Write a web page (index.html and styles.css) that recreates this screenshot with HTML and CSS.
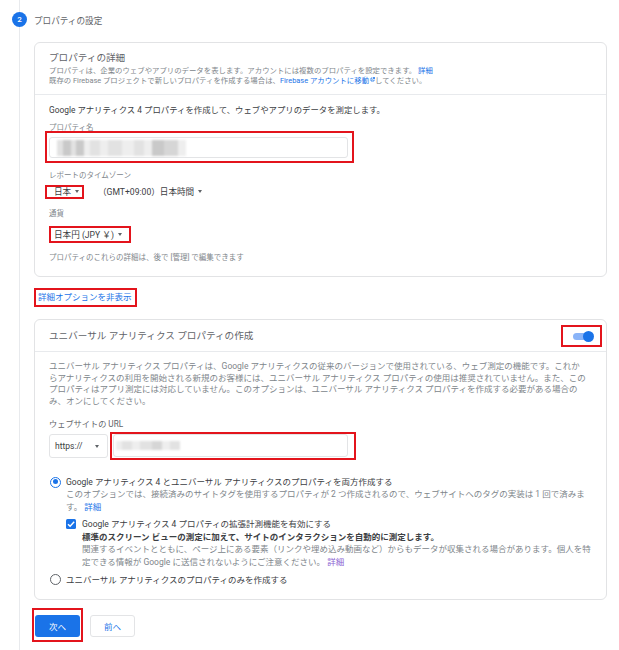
FILE: index.html
```html
<!DOCTYPE html>
<html lang="ja">
<head>
    <meta charset="UTF-8">
    <meta name="viewport" content="width=device-width, initial-scale=1.0">
    <title>プロパティの設定</title>
    <link rel="stylesheet" href="styles.css">
</head>
<body>
    <div class="step">
        <div class="step-head">
            <span class="step-num">2</span>
            <span class="step-title">プロパティの設定</span>
        </div>

        <div class="step-body">
            <!-- property details -->
            <section class="card">
                <div class="card-head">
                    <h2 class="card-title">プロパティの詳細</h2>
                    <p class="card-desc">
                        プロパティは、企業のウェブやアプリのデータを表します。アカウントには複数のプロパティを設定できます。 <a class="link" href="#">詳細</a><br>
                        既存の Firebase プロジェクトで新しいプロパティを作成する場合は、<a class="link" href="#">Firebase アカウントに移動<svg class="ext" viewBox="0 0 10 10"><path d="M2 2h3M2 2v6h6V5M6 1h3v3M9 1 5 5" fill="none" stroke="currentColor" stroke-width="1.6"/></svg></a>してください。
                    </p>
                </div>
                <div class="card-body">
                    <p class="lead">Google アナリティクス 4 プロパティを作成して、ウェブやアプリのデータを測定します。</p>

                    <div class="field-label label-name">プロパティ名</div>
                    <div class="mark mark-name">
                        <div class="text-input">
                            <span class="blur">
                                <i class="px g1 w6"></i><i class="px g3 w8"></i><i class="px g1 w5"></i><i class="px g3 w8"></i><i class="px g0 w6"></i><i class="px g1 w10"></i><i class="px g0 w8"></i><i class="px g1 w14"></i><i class="px g0 w12"></i><i class="px g1 w10"></i><i class="px g0 w8"></i><i class="px g3 w12"></i><i class="px g2 w14"></i><i class="px g0 w8"></i>
                            </span>
                        </div>
                    </div>

                    <div class="field-label label-tz">レポートのタイムゾーン</div>
                    <div class="tz-row">
                        <div class="mark mark-country">
                            <span class="select-value">日本<span class="caret"></span></span>
                        </div>
                        <span class="select-value">（GMT+09:00）日本時間<span class="caret"></span></span>
                    </div>

                    <div class="field-label label-currency">通貨</div>
                    <div class="mark mark-currency">
                        <span class="select-value currency">日本円 (JPY ￥)<span class="caret"></span></span>
                    </div>

                    <p class="note">プロパティのこれらの詳細は、後で [管理] で編集できます</p>
                </div>
            </section>

            <div class="mark mark-toggle-link">
                <a class="link advanced" href="#">詳細オプションを非表示</a>
            </div>

            <!-- universal analytics -->
            <section class="card ua-card">
                <div class="card-head ua-head">
                    <h2 class="card-title">ユニバーサル アナリティクス プロパティの作成</h2>
                    <div class="mark mark-switch">
                        <span class="switch">
                            <span class="switch-track"></span>
                            <span class="switch-thumb"></span>
                        </span>
                    </div>
                </div>
                <div class="card-body ua-body">
                    <p class="para">ユニバーサル アナリティクス プロパティは、Google アナリティクスの従来のバージョンで使用されている、ウェブ測定の機能です。これからアナリティクスの利用を開始される新規のお客様には、ユニバーサル アナリティクス プロパティの使用は推奨されていません。また、このプロパティはアプリ測定には対応していません。このオプションは、ユニバーサル アナリティクス プロパティを作成する必要がある場合のみ、オンにしてください。</p>

                    <div class="url-label">ウェブサイトの URL</div>
                    <div class="url-row">
                        <div class="protocol">
                            <span>https://</span>
                            <span class="caret"></span>
                        </div>
                        <div class="mark mark-url">
                            <div class="text-input url-input">
                                <span class="blur blur-url">
                                    <i class="px g0 w6"></i><i class="px g1 w10"></i><i class="px g0 w8"></i><i class="px g1 w12"></i><i class="px g2 w10"></i><i class="px g0 w8"></i><i class="px g1 w10"></i>
                                </span>
                            </div>
                        </div>
                    </div>

                    <div class="option">
                        <span class="radio checked"></span>
                        <div class="option-text">
                            <div class="option-title">Google アナリティクス 4 とユニバーサル アナリティクスのプロパティを両方作成する</div>
                            <div class="option-desc"><span>このオプションでは、接続済みのサイトタグを使用するプロパティが 2 つ作成されるので、ウェブサイトへのタグの実装は 1 回で済みま</span><span>す。</span> <a class="link" href="#">詳細</a></div>
                        </div>
                    </div>

                    <div class="check-row">
                        <span class="checkbox">
                            <svg viewBox="0 0 10 10"><path d="M2 5.2 4.1 7.3 8.2 2.8" fill="none" stroke="#fff" stroke-width="1.4"/></svg>
                        </span>
                        <div class="check-text">
                            <div class="check-title">Google アナリティクス 4 プロパティの拡張計測機能を有効にする</div>
                            <div class="check-strong">標準のスクリーン ビューの測定に加えて、サイトのインタラクションを自動的に測定します。</div>
                            <div class="check-desc"><span>関連するイベントとともに、ページ上にある要素（リンクや埋め込み動画など）からもデータが収集される場合があります。個人を特</span><span>定できる情報が Google に送信されないようにご注意ください。</span> <a class="link visited" href="#">詳細</a></div>
                        </div>
                    </div>

                    <div class="option option-last">
                        <span class="radio"></span>
                        <div class="option-text">
                            <div class="option-title">ユニバーサル アナリティクスのプロパティのみを作成する</div>
                        </div>
                    </div>
                </div>
            </section>

            <div class="actions">
                <div class="mark mark-next">
                    <button class="btn btn-primary">次へ</button>
                </div>
                <button class="btn btn-outline">前へ</button>
            </div>
        </div>
    </div>
</body>
</html>
```

FILE: styles.css
```css
body {
    margin: 0;
    font-family: Roboto, "Noto Sans CJK JP", sans-serif;
    color: #3c4043;
    background-color: #fff;
}

p, h2 {
    margin: 0;
}

.link {
    display: inline-block;
    color: #1a73e8;
    text-decoration: none;
}

.link.visited {
    color: #8a63d2;
}

.ext {
    width: 5px;
    height: 5px;
    margin-left: 1px;
    vertical-align: 1px;
}

/* stepper */
.step {
    position: relative;
    padding-bottom: 8px;
}

.step::before {
    content: "";
    position: absolute;
    left: 19px;
    top: 0;
    bottom: 0;
    width: 1px;
    background-color: #e8eaed;
}

.step-head {
    display: flex;
    align-items: center;
    gap: 7px;
    height: 15px;
    padding: 12px 0 0 12px;
}

.step-num {
    position: relative;
    width: 15px;
    height: 15px;
    border-radius: 50%;
    background-color: #1a73e8;
    color: #fff;
    font-size: 8px;
    font-weight: 500;
    display: flex;
    align-items: center;
    justify-content: center;
}

.step-title {
    font-size: 8.6px;
    color: #5f6368;
}

.step-body {
    margin: 15px 0 0 34px;
    width: 573px;
}

/* annotation frames */
.mark {
    border: 2px solid #e3141c;
    box-sizing: border-box;
}

/* cards */
.card {
    border: 1px solid #e2e3e5;
    border-radius: 6px;
    background-color: #fff;
}

.card-head {
    padding: 8px 14px;
    border-bottom: 1px solid #e8eaed;
}

.card-title {
    font-size: 9.6px;
    line-height: 14px;
    font-weight: 400;
    color: #5f6368;
}

.card-desc {
    margin-top: 1px;
    font-size: 7.4px;
    line-height: 10px;
    color: #80868b;
}

.card-body {
    padding: 9px 14px 13px;
}

.lead {
    font-size: 8.4px;
    line-height: 12px;
}

.field-label {
    font-size: 7.5px;
    line-height: 10px;
    color: #80868b;
}

.label-name {
    margin-top: 7px;
    margin-bottom: -2px;
}

.label-tz {
    margin-top: 8px;
}

.label-currency {
    margin-top: 10px;
}

.mark-name {
    width: 309px;
    margin-left: -4px;
    padding: 4px 4px 3px 2px;
}

.text-input {
    height: 21px;
    border: 1px solid #e3e4e6;
    border-radius: 3px;
    box-sizing: border-box;
    display: flex;
    align-items: center;
    padding-left: 7px;
}

.blur {
    display: flex;
    height: 16px;
    filter: blur(0.8px);
}

.px {
    display: block;
    height: 100%;
}

.g0 { background-color: #eeeeee; }
.g1 { background-color: #e2e2e2; }
.g2 { background-color: #d6d6d6; }
.g3 { background-color: #c9c9c9; }

.w5 { width: 5px; }
.w6 { width: 6px; }
.w8 { width: 8px; }
.w10 { width: 10px; }
.w12 { width: 12px; }
.w14 { width: 14px; }

.tz-row {
    display: flex;
    align-items: center;
    gap: 14px;
    margin-top: 4px;
}

.select-value {
    font-size: 8.6px;
    line-height: 10px;
    white-space: nowrap;
}

.caret {
    display: inline-block;
    width: 0;
    height: 0;
    margin-left: 4px;
    border-left: 2.5px solid transparent;
    border-right: 2.5px solid transparent;
    border-top: 3px solid #5f6368;
    vertical-align: 2px;
}

.mark-country {
    width: 39px;
    height: 14px;
    margin-left: -4px;
    padding-left: 7px;
    display: flex;
    align-items: center;
}

.mark-currency {
    width: 82px;
    height: 17px;
    margin-top: 7px;
    padding-left: 3px;
    display: flex;
    align-items: center;
}

.note {
    margin-top: 10px;
    font-size: 7.5px;
    line-height: 10px;
    color: #80868b;
}

.mark-toggle-link {
    display: inline-block;
    margin-top: 11px;
    padding: 0 3px 0 2px;
}

.advanced {
    display: block;
    font-size: 8.5px;
    line-height: 15px;
}

/* universal analytics card */
.ua-card {
    margin-top: 12px;
}

.ua-head {
    display: flex;
    align-items: center;
    justify-content: space-between;
    padding: 5px 4px 4px 14px;
}

.mark-switch {
    width: 41px;
    height: 22px;
    display: flex;
    align-items: center;
    justify-content: center;
}

.switch {
    position: relative;
    width: 20px;
    height: 11px;
    margin-left: 2px;
}

.switch-track {
    position: absolute;
    left: 0;
    top: 2px;
    width: 19px;
    height: 7px;
    border-radius: 4px;
    background-color: #8ab4f8;
}

.switch-thumb {
    position: absolute;
    right: -1px;
    top: 0;
    width: 11px;
    height: 11px;
    border-radius: 50%;
    background-color: #1a73e8;
}

.ua-body {
    padding: 9px 14px 13px;
}

.para {
    margin-right: 6px;
    font-size: 8.5px;
    line-height: 11.6px;
    color: #80868b;
}

.url-label {
    margin-top: 12px;
    font-size: 8.2px;
    line-height: 11px;
    color: #5f6368;
}

.url-row {
    display: flex;
    align-items: center;
    gap: 2px;
    margin-top: 2px;
}

.protocol {
    width: 59px;
    height: 24px;
    box-sizing: border-box;
    border: 1px solid #e3e4e6;
    border-radius: 3px;
    display: flex;
    align-items: center;
    justify-content: space-between;
    padding: 0 8px 0 5px;
    font-size: 8.5px;
    color: #3c4043;
}

.mark-url {
    width: 246px;
    height: 28px;
    padding: 0 6px 1px 1px;
    display: flex;
    align-items: center;
}

.url-input {
    flex: 1;
    height: 23px;
    padding-left: 2px;
}

.blur-url {
    height: 9px;
}

.option {
    display: flex;
    align-items: flex-start;
    gap: 5px;
    margin-top: 16px;
    padding-left: 1px;
}

.option-last {
    margin-top: 6px;
}

.radio {
    flex: none;
    width: 11px;
    height: 11px;
    box-sizing: border-box;
    border: 1.5px solid #5f6368;
    border-radius: 50%;
    margin-top: 0.5px;
    position: relative;
}

.radio.checked {
    border-color: #1a73e8;
}

.radio.checked::after {
    content: "";
    position: absolute;
    left: 1.5px;
    top: 1.5px;
    width: 5px;
    height: 5px;
    border-radius: 50%;
    background-color: #1a73e8;
}

.option-title {
    font-size: 8.5px;
    line-height: 12px;
    color: #3c4043;
}

.option-desc {
    font-size: 8.5px;
    line-height: 12.4px;
    color: #80868b;
}

.check-row {
    display: flex;
    align-items: flex-start;
    gap: 6px;
    margin-top: 4.5px;
    padding-left: 17px;
}

.checkbox {
    flex: none;
    width: 10px;
    height: 10px;
    margin-top: 1.5px;
    border-radius: 1.5px;
    background-color: #1a73e8;
}

.checkbox svg {
    display: block;
    width: 10px;
    height: 10px;
}

.check-title {
    font-size: 8.5px;
    line-height: 13px;
    color: #3c4043;
}

.check-strong {
    font-size: 8.5px;
    line-height: 13px;
    font-weight: 700;
    color: #3c4043;
}

.check-desc {
    margin-top: -0.6px;
    font-size: 8.5px;
    line-height: 12.4px;
    color: #80868b;
}

/* buttons */
.actions {
    display: flex;
    align-items: flex-start;
    gap: 7px;
    margin-top: 8px;
}

.mark-next {
    margin-left: -2px;
    padding: 5px 1px 3px 1px;
}

.btn {
    display: block;
    height: 22px;
    padding: 0;
    font-family: inherit;
    font-size: 8.5px;
    border-radius: 3px;
    cursor: pointer;
}

.btn-primary {
    width: 45px;
    border: none;
    background-color: #1a73e8;
    color: #fff;
}

.btn-outline {
    width: 45px;
    margin-top: 7px;
    border: 1px solid #e3e4e6;
    background-color: #fff;
    color: #1a73e8;
}
```
